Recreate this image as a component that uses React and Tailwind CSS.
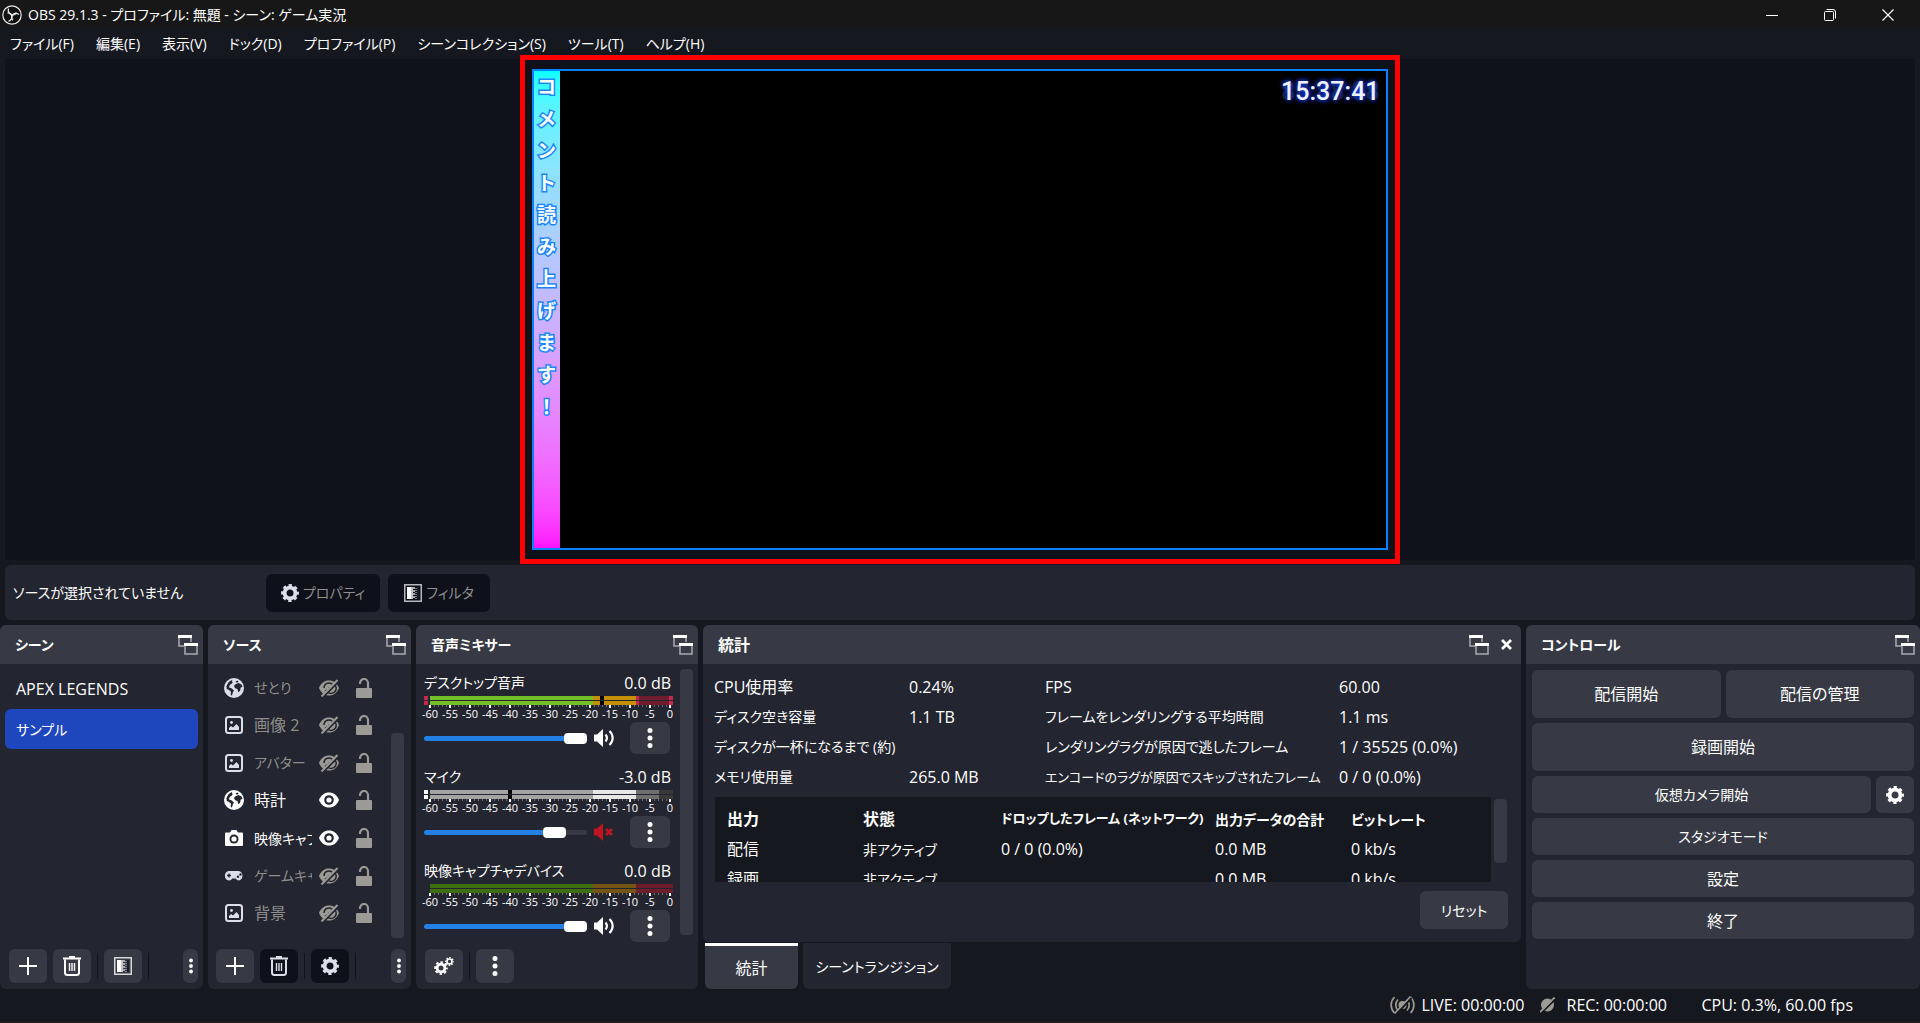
// src/App.jsx
import React, { useState } from 'react';

const MENU_ITEMS = [
  'ファイル(F)',
  '編集(E)',
  '表示(V)',
  'ドック(D)',
  'プロファイル(P)',
  'シーンコレクション(S)',
  'ツール(T)',
  'ヘルプ(H)',
];

const SCENES = ['APEX LEGENDS', 'サンプル'];

const SOURCES = [
  { name: 'せとり', icon: 'globe', visible: false },
  { name: '画像 2', icon: 'image', visible: false },
  { name: 'アバター', icon: 'image', visible: false },
  { name: '時計', icon: 'globe', visible: true },
  { name: '映像キャプチャデバイス', icon: 'camera', visible: true },
  { name: 'ゲームキャプチャ', icon: 'gamepad', visible: false },
  { name: '背景', icon: 'image', visible: false },
];

const CHANNELS = [
  {
    name: 'デスクトップ音声',
    db: '0.0 dB',
    volume: 100,
    muted: false,
    clip: '#c4284a',
    peak: 176,
    segments: [
      [6, 163, '#74bf26'],
      [169, 43, '#c48f00'],
      [212, 3, '#c4284a'],
      [215, 30, '#6f1d2d'],
      [245, 4, '#c4284a'],
    ],
  },
  {
    name: 'マイク',
    db: '-3.0 dB',
    volume: 85,
    muted: true,
    clip: '#ffffff',
    peak: 84,
    segments: [
      [6, 163, '#a3a3a3'],
      [169, 43, '#e6e6e6'],
      [212, 23, '#6e6e6e'],
      [235, 14, '#393939'],
    ],
  },
  {
    name: '映像キャプチャデバイス',
    db: '0.0 dB',
    volume: 100,
    muted: false,
    clip: null,
    peak: null,
    segments: [
      [6, 163, '#3f7010'],
      [169, 43, '#755414'],
      [212, 37, '#6f1d2d'],
    ],
  },
];

const METER_LABELS = ['-60', '-55', '-50', '-45', '-40', '-35', '-30', '-25', '-20', '-15', '-10', '-5', '0'];

const STATS = [
  ['CPU使用率', '0.24%', 'FPS', '60.00'],
  ['ディスク空き容量', '1.1 TB', 'フレームをレンダリングする平均時間', '1.1 ms'],
  ['ディスクが一杯になるまで (約)', '', 'レンダリングラグが原因で逃したフレーム', '1 / 35525 (0.0%)'],
  ['メモリ使用量', '265.0 MB', 'エンコードのラグが原因でスキップされたフレーム', '0 / 0 (0.0%)'],
];

const OUTPUTS = [
  ['配信', '非アクティブ', '0 / 0 (0.0%)', '0.0 MB', '0 kb/s'],
  ['録画', '非アクティブ', '', '0.0 MB', '0 kb/s'],
];

// labels that are mostly kana are set smaller than kanji and latin ones
const textSize = (text) => {
  const kana = (text.match(/[ぁ-ヶー]/g) || []).length;
  if (text.length > 20) return 'text-[13px]';
  return kana > text.length / 3 ? 'text-[14px]' : 'text-[16px]';
};

/* ---------- icons ---------- */

const ObsLogo = () => (
  <svg width="20" height="20" viewBox="0 0 20 20" fill="none" stroke="#e8e8e8">
    <circle cx="10" cy="10" r="9.2" fill="#111" strokeWidth="1.2" />
    <path d="M6.5 3.5c-.8 3.2.6 5.600 3.600 6.300 2.200.5 3.500-.6 4.300-2.300" strokeWidth="1.300" />
    <path d="M17 9.500c-2.600-1.600-5.200-1.300-6.700.8-1.200 1.900-.7 3.600.6 4.900" strokeWidth="1.300" />
    <path d="M6.500 16.300c2.700-1 3.700-3.300 3.200-5.600-.6-2-2.200-2.900-4.200-2.700" strokeWidth="1.300" />
  </svg>
);

const GearIcon = ({ size = 18, color = '#fff' }) => (
  <svg width={size} height={size} viewBox="0 0 20 20" fill="none" stroke={color}>
    <circle cx="10" cy="10" r="6" strokeWidth="4.200" />
    <circle cx="10" cy="10" r="8.500" strokeWidth="2.800" strokeDasharray="3.676 3" strokeDashoffset="1.838" />
  </svg>
);

const GearsIcon = () => (
  <svg width="20" height="18" viewBox="0 0 20 18" fill="none" stroke="#fff">
    <circle cx="7" cy="11" r="3.900" strokeWidth="2.800" />
    <circle cx="7" cy="11" r="5.800" strokeWidth="2" strokeDasharray="2.555 2" strokeDashoffset="1.277" />
    <circle cx="15.500" cy="4.500" r="2.500" strokeWidth="1.600" />
    <circle cx="15.500" cy="4.500" r="3.700" strokeWidth="1.400" strokeDasharray="1.600 1.306" strokeDashoffset=".8" />
  </svg>
);

const FilterIcon = ({ color = '#d8d8d8' }) => (
  <svg width="18" height="18" viewBox="0 0 18 18">
    <rect x=".75" y=".75" width="16.500" height="16.500" fill="none" stroke={color} strokeWidth="1.500" />
    <rect x="3" y="3" width="4" height="12" fill="#fff" />
    <rect x="7" y="3" width="2" height="12" fill="#c4c4c8" />
    <path d="M10 3v12" stroke="#a5a7ad" strokeWidth="2" strokeDasharray="2 1" />
    <path d="M12 4v11" stroke="#777a84" strokeWidth="2" strokeDasharray="1 1" />
    <rect x="13" y="3" width="2" height="12" fill="#1b1d26" />
  </svg>
);

const DockIcon = () => (
  <svg width="20" height="20" viewBox="0 0 20 20" fill="none">
    <path d="M6 11H1V2h12v5" stroke="#a9abb1" strokeWidth="1.500" />
    <path d="M0 1.500h14" stroke="#fff" strokeWidth="3" />
    <rect x="7" y="9" width="12" height="10" fill="#373a45" stroke="#a9abb1" strokeWidth="1.500" />
    <path d="M6 9.500h14" stroke="#fff" strokeWidth="3" />
  </svg>
);

const PlusIcon = () => (
  <svg width="18" height="18" viewBox="0 0 18 18" stroke="#fff" strokeWidth="2">
    <path d="M9 0v18M0 9h18" />
  </svg>
);

const TrashIcon = ({ color = '#fff' }) => (
  <svg width="20" height="20" viewBox="0 0 20 20" fill="none" stroke={color}>
    <path d="M1 2.500h18M7 1h6" strokeWidth="2" />
    <path d="M3 3.500v13a2.500 2.500 0 0 0 2.500 2.500h9a2.500 2.500 0 0 0 2.500-2.500v-13" strokeWidth="2" />
    <path d="M7.500 7v8M10 7v8M12.500 7v8" strokeWidth="1.400" />
  </svg>
);

const DotsIcon = ({ small = false }) => (
  <svg width="6" height={small ? 16 : 20} viewBox={small ? '0 0 6 16' : '0 0 6 20'} fill="#fff">
    <circle cx="3" cy="2.500" r={small ? 1.9 : 2.5} />
    <circle cx="3" cy={small ? 8 : 10} r={small ? 1.9 : 2.5} />
    <circle cx="3" cy={small ? 13.5 : 17.5} r={small ? 1.9 : 2.5} />
  </svg>
);

const EyeIcon = ({ visible }) =>
  visible ? (
    <svg width="20" height="16" viewBox="0 0 20 16">
      <path d="M0 8c2-5 5.500-7.500 10-7.500S18 3 20 8c-2 5-5.500 7.500-10 7.500S2 13 0 8z" fill="#fff" />
      <circle cx="10" cy="8" r="4.800" fill="#232530" />
      <circle cx="10" cy="8" r="2.600" fill="#fff" />
    </svg>
  ) : (
    <svg width="20" height="18" viewBox="0 0 20 18">
      <path d="M0 9c2-5 5.500-7.500 10-7.500S18 4 20 9c-2 5-5.500 7.500-10 7.500S2 14 0 9z" fill="#9c9a94" />
      <path d="M5 9a5 5 0 0 1 9-3M6 12.500 15 5a5 5 0 0 1-6 8.500" fill="none" stroke="#232530" strokeWidth="1.500" />
      <circle cx="10" cy="9" r="2" fill="none" stroke="#9c9a94" strokeWidth="1.500" />
      <path d="M3.500 18.500 19.500 2.500" stroke="#232530" strokeWidth="2.200" />
      <path d="M2.500 17.500 18.500 1" stroke="#9c9a94" strokeWidth="2" />
    </svg>
  );

const LockIcon = () => (
  <svg width="16" height="20" viewBox="0 0 16 20">
    <path d="M4 6V5a4 4 0 0 1 8 0v6" fill="none" stroke="#9c9a94" strokeWidth="2.200" />
    <rect y="10" width="16" height="10" rx="1" fill="#9c9a94" />
  </svg>
);

const SpeakerIcon = ({ muted }) => (
  <svg width="21" height="18" viewBox="0 0 21 18" fill={muted ? '#c0151f' : '#fff'}>
    <path d="M0 5.500h3L9 0v18l-6-5.500H0z" />
    {muted ? (
      <path d="M12 6l6 6M18 6l-6 6" stroke="#c0151f" strokeWidth="2.800" />
    ) : (
      <g fill="none" stroke="#fff" strokeWidth="2.200">
        <path d="M11.500 5.500c1.800 2.200 1.800 4.800 0 7" />
        <path d="M15.500 2c4.200 4.200 4.200 9.800 0 14" />
      </g>
    )}
  </svg>
);

const SourceIcon = ({ type, color }) => {
  if (type === 'globe') {
    return (
      <svg width="20" height="20" viewBox="0 0 20 20">
        <circle cx="10" cy="10" r="10" fill={color} />
        <path d="M7 2.500 4.500 4.200 2.500 8l.2 3 2 .8 2.300 2-.3 3.200 1.300.5.800-3 1.200-2-2.600-2.300-2.400-.7.700-2.500L8.500 5 8 2z" fill="#232530" />
        <path d="M11 6.500l3.500-1.500 3 1.500 1 2.500-1.800.5-.6 3.300-1.800 1.500-.9-3.300-2.200-.8-1.200-2zM11.500 3.500l2-1 1.200 1.500-2 .8z" fill="#232530" />
      </svg>
    );
  }
  if (type === 'camera') {
    return (
      <svg width="18" height="16" viewBox="0 0 18 16">
        <path d="M1 2.500h4L6.500 0h5L13 2.500h4a1 1 0 0 1 1 1V15a1 1 0 0 1-1 1H1a1 1 0 0 1-1-1V3.500a1 1 0 0 1 1-1z" fill={color} />
        <circle cx="9" cy="9" r="4.500" fill="#232530" />
        <circle cx="9" cy="9" r="2.600" fill={color} />
      </svg>
    );
  }
  if (type === 'gamepad') {
    return (
      <svg width="20" height="10" viewBox="0 0 20 10">
        <path d="M5 0h10a5 5 0 0 1 0 9.500c-1.500 0-2.500-.8-3.200-2H8.200C7.500 8.700 6.500 9.500 5 9.500A4.800 4.800 0 0 1 5 0z" fill={color} />
        <path d="M5 2.500v4M3 4.500h4" stroke="#232530" strokeWidth="1.400" />
        <circle cx="14" cy="5.800" r="1.200" fill="#232530" />
        <circle cx="16.500" cy="3.500" r="1.200" fill="#232530" />
      </svg>
    );
  }
  return (
    <svg width="18" height="18" viewBox="0 0 18 18">
      <rect x="1" y="1" width="16" height="16" rx="2.500" fill="none" stroke={color} strokeWidth="2" />
      <circle cx="6.500" cy="6.500" r="1.400" fill={color} />
      <path d="M4 14v-2l2-2 2 1.500L11.500 8l2.500 3v3z" fill={color} />
    </svg>
  );
};

/* ---------- shared pieces ---------- */

const DockTitle = ({ title, closable }) => (
  <header className="flex h-[39px] shrink-0 items-center rounded-t-md bg-[#373a45] pr-[5px] pl-[15px]">
    <h2 className={`flex-1 font-bold ${textSize(title)}`}>{title}</h2>
    <button type="button" aria-label="ドックを切り離す"><DockIcon /></button>
    {closable && (
      <button type="button" aria-label="閉じる" className="mr-1 ml-3">
        <svg width="11" height="11" viewBox="0 0 11 11" stroke="#fff" strokeWidth="2.800">
          <path d="M1 1l9 9M10 1l-9 9" />
        </svg>
      </button>
    )}
  </header>
);

const ToolButton = ({ label, dark, children }) => (
  <button
    type="button"
    aria-label={label}
    className={`flex h-[34px] w-[38px] items-center justify-center rounded-md ${dark ? 'bg-[#0e101a]' : 'bg-[#373a45]'}`}
  >
    {children}
  </button>
);

const Divider = () => <span className="h-[26px] w-px bg-[#12141c]" />;

const SmallMenuButton = () => (
  <button type="button" aria-label="その他" className="ml-auto flex h-[34px] w-[15px] items-center justify-center rounded-md bg-[#373a45]">
    <DotsIcon small />
  </button>
);

const ControlButton = ({ tall, label }) => (
  <button type="button" className={`flex-1 rounded-md bg-[#373a45] ${tall ? 'h-[48px]' : 'h-[37px]'} ${textSize(label)}`}>
    {label}
  </button>
);

/* ---------- docks ---------- */

const ScenesDock = () => {
  const [selected, setSelected] = useState(1);

  return (
    <section className="flex w-[203px] shrink-0 flex-col rounded-md bg-[#232530]">
      <DockTitle title="シーン" />
      <ul className="flex-1 p-[5px]">
        {SCENES.map((scene, i) => (
          <li key={scene}>
            <button
              type="button"
              onClick={() => setSelected(i)}
              className={`block h-10 w-full rounded-md px-[11px] text-left ${textSize(scene)} ${selected === i ? 'bg-[#1f47bd]' : ''}`}
            >
              {scene}
            </button>
          </li>
        ))}
      </ul>
      <div className="flex items-center gap-[6px] pr-[5px] pb-[6px] pl-[9px]">
        <ToolButton label="シーンを追加"><PlusIcon /></ToolButton>
        <ToolButton label="シーンを削除"><TrashIcon /></ToolButton>
        <Divider />
        <ToolButton label="シーンフィルタ"><FilterIcon /></ToolButton>
        <Divider />
        <SmallMenuButton />
      </div>
    </section>
  );
};

const SourcesDock = () => (
  <section className="flex w-[203px] shrink-0 flex-col rounded-md bg-[#232530]">
    <DockTitle title="ソース" />
    <div className="flex min-h-0 flex-1 pt-[5px] pr-[7px] pl-4">
      <ul className="grid h-[263px] flex-1 auto-rows-fr">
        {SOURCES.map((source) => (
          <li key={source.name} className="flex items-center">
            <span className="flex w-5 shrink-0 justify-center">
              <SourceIcon type={source.icon} color={source.visible ? '#fff' : '#dcdeea'} />
            </span>
            <span className={`ml-[10px] w-[58px] overflow-hidden whitespace-nowrap ${textSize(source.name)} ${source.visible ? '' : 'text-[#8f8e8b]'}`}>
              {source.name}
            </span>
            <button type="button" aria-label={`${source.name} 表示`} className="ml-[7px]"><EyeIcon visible={source.visible} /></button>
            <button type="button" aria-label={`${source.name} ロック`} className="ml-[17px]"><LockIcon /></button>
          </li>
        ))}
      </ul>
      <div className="mt-16 h-[205px] w-[13px] rounded-sm bg-[#373a45]" />
    </div>
    <div className="flex items-center gap-[6px] pr-[5px] pb-[6px] pl-2">
      <ToolButton label="ソースを追加"><PlusIcon /></ToolButton>
      <ToolButton label="ソースを削除" dark><TrashIcon color="#dcdeea" /></ToolButton>
      <Divider />
      <ToolButton label="ソースのプロパティ" dark><GearIcon color="#dcdeea" /></ToolButton>
      <Divider />
      <SmallMenuButton />
    </div>
  </section>
);

const VolumeMeter = ({ channel }) => (
  <svg width="250" height="12" viewBox="0 0 250 12" shapeRendering="crispEdges" className="block">
    {[0, 5].map((y) => (
      <g key={y}>
        {channel.clip && <rect x="0" y={y} width="4" height="4" fill={channel.clip} />}
        {channel.segments.map(([x, width, fill]) => (
          <rect key={x} x={x} y={y} width={width} height="4" fill={fill} />
        ))}
        {channel.peak && <rect x={channel.peak} y={y} width="4" height="4" fill="#000" />}
      </g>
    ))}
    {Array.from({ length: 61 }, (_, i) => (
      <rect
        key={i}
        x={i % 5 === 0 ? 5 + i * 4 : 6 + i * 4}
        y="9"
        width={i % 5 === 0 ? 2 : 1}
        height={i % 5 === 0 ? 3 : 2}
        fill={i % 5 === 0 ? '#fff' : '#6a6a6a'}
      />
    ))}
  </svg>
);

const MixerChannel = ({ channel }) => {
  const [volume, setVolume] = useState(channel.volume);

  return (
    <div className="h-[94px]">
      <div className="flex h-[27px] w-[247px] items-center justify-between whitespace-nowrap">
        <span className="text-[14px]">{channel.name}</span>
        <span className="text-[16px]">{channel.db}</span>
      </div>
      <VolumeMeter channel={channel} />
      <div className="-ml-1 flex h-[14px] text-[11px] leading-3">
        {METER_LABELS.map((label) => (
          <span key={label} className="w-5 text-center">{label}</span>
        ))}
      </div>
      <div className="flex h-8 items-center">
        <input
          type="range"
          aria-label={channel.name}
          value={volume}
          onChange={(e) => setVolume(Number(e.target.value))}
          style={{ '--fill': `${volume * 0.9}%` }}
          className="h-3 w-[163px] appearance-none bg-transparent [&::-webkit-slider-runnable-track]:h-[5px] [&::-webkit-slider-runnable-track]:rounded-full [&::-webkit-slider-runnable-track]:bg-[linear-gradient(to_right,#2380e4_var(--fill),#373a45_var(--fill))] [&::-webkit-slider-thumb]:-mt-[3px] [&::-webkit-slider-thumb]:h-[11px] [&::-webkit-slider-thumb]:w-[23px] [&::-webkit-slider-thumb]:appearance-none [&::-webkit-slider-thumb]:rounded [&::-webkit-slider-thumb]:bg-white"
        />
        <button type="button" aria-label="ミュート" className="ml-[7px]"><SpeakerIcon muted={channel.muted} /></button>
        <button type="button" aria-label="音声メニュー" className="ml-[15px] flex h-8 w-10 items-center justify-center rounded-md bg-[#373a45]">
          <DotsIcon />
        </button>
      </div>
    </div>
  );
};

const MixerDock = () => (
  <section className="flex w-[282px] shrink-0 flex-col rounded-md bg-[#232530]">
    <DockTitle title="音声ミキサー" />
    <div className="flex min-h-0 flex-1 justify-between pt-[5px] pr-[5px] pl-2">
      <div>
        {CHANNELS.map((channel) => (
          <MixerChannel key={channel.name} channel={channel} />
        ))}
      </div>
      <div className="h-[266px] w-[13px] rounded-sm bg-[#373a45]" />
    </div>
    <div className="flex items-center gap-[6px] pb-[6px] pl-[9px]">
      <ToolButton label="オーディオの詳細"><GearsIcon /></ToolButton>
      <Divider />
      <ToolButton label="メニュー"><DotsIcon /></ToolButton>
    </div>
  </section>
);

const StatsDock = () => (
  <div className="flex min-w-0 flex-1 flex-col">
    <section className="flex flex-1 flex-col rounded-md bg-[#232530]">
      <DockTitle title="統計" closable />
      <dl className="grid grid-cols-[195px_136px_294px_1fr] px-[11px] pt-2 whitespace-nowrap">
        {STATS.flat().map((text, i) =>
          i % 2 === 0 ? (
            <dt key={i} className={`h-[30px] leading-[30px] ${textSize(text)}`}>{text}</dt>
          ) : (
            <dd key={i} className="h-[30px] text-[16px] leading-[30px]">{text}</dd>
          )
        )}
      </dl>
      <div className="mt-[5px] flex gap-[3px] pr-[14px] pl-3">
        <div className="h-[85px] flex-1 overflow-hidden bg-[#161820] pt-[7px] pl-3">
          <table className="w-full table-fixed text-left whitespace-nowrap">
            <thead>
              <tr className="h-[30px]">
                <th className="w-[136px] text-[16px]">出力</th>
                <th className="w-[138px] text-[16px]">状態</th>
                <th className="w-[214px] text-[13px]">ドロップしたフレーム (ネットワーク)</th>
                <th className="w-[136px] text-[14px]">出力データの合計</th>
                <th className="text-[14px]">ビットレート</th>
              </tr>
            </thead>
            <tbody>
              {OUTPUTS.map((row) => (
                <tr key={row[0]} className="h-[30px]">
                  {row.map((cell, i) => (
                    <td key={i} className={textSize(cell)}>{cell}</td>
                  ))}
                </tr>
              ))}
            </tbody>
          </table>
        </div>
        <div className="mt-[2px] h-16 w-[13px] rounded-sm bg-[#373a45]" />
      </div>
      <div className="mt-auto flex justify-end pr-[13px] pb-[13px]">
        <button type="button" className="h-[38px] w-[88px] rounded-md bg-[#373a45] text-[14px]">リセット</button>
      </div>
    </section>
    <div role="tablist" className="mt-px flex gap-[5px] pl-[2px]">
      <button type="button" role="tab" aria-selected="true" className="h-[46px] w-[93px] rounded-b-md border-t-[3px] border-white bg-[#373a45] text-[16px]">統計</button>
      <button type="button" role="tab" aria-selected="false" className="h-[46px] w-[148px] rounded-b-md bg-[#232530] text-[14px]">シーントランジション</button>
    </div>
  </div>
);

const ControlsDock = () => (
  <section className="flex w-[394px] shrink-0 flex-col rounded-md bg-[#232530]">
    <DockTitle title="コントロール" />
    <div className="flex flex-col gap-[5px] px-[6px] pt-[6px]">
      <div className="flex gap-[5px]">
        <ControlButton tall label="配信開始" />
        <ControlButton tall label="配信の管理" />
      </div>
      <div className="flex"><ControlButton tall label="録画開始" /></div>
      <div className="flex gap-[5px]">
        <ControlButton label="仮想カメラ開始" />
        <button type="button" aria-label="仮想カメラの設定" className="flex w-[38px] items-center justify-center rounded-md bg-[#373a45]">
          <GearIcon />
        </button>
      </div>
      <div className="flex"><ControlButton label="スタジオモード" /></div>
      <div className="flex"><ControlButton label="設定" /></div>
      <div className="flex"><ControlButton label="終了" /></div>
    </div>
  </section>
);

/* ---------- window parts ---------- */

const TitleBar = () => (
  <div className="flex h-[29px] shrink-0 items-center bg-[#171717] pl-[2px] text-[14px]">
    <ObsLogo />
    <h1 className="ml-[6px] flex-1">OBS 29.1.3 - プロファイル: 無題 - シーン: ゲーム実況</h1>
    <div className="flex gap-[46px] pr-[26px]">
      <button type="button" aria-label="最小化">
        <svg width="12" height="12" viewBox="0 0 12 12" stroke="#fff"><path d="M0 6.500h12" /></svg>
      </button>
      <button type="button" aria-label="元に戻す">
        <svg width="12" height="12" viewBox="0 0 12 12" fill="none" stroke="#fff">
          <rect x=".5" y="2.500" width="9" height="9" rx="1" />
          <path d="M2.500.5H9a2.500 2.500 0 0 1 2.500 2.500v6.500" />
        </svg>
      </button>
      <button type="button" aria-label="閉じる">
        <svg width="12" height="12" viewBox="0 0 12 12" stroke="#fff" strokeWidth="1.200"><path d="M.5.5l11 11M11.500.5l-11 11" /></svg>
      </button>
    </div>
  </div>
);

const MenuBar = () => (
  <nav className="flex h-[30px] shrink-0 items-center gap-[22px] px-[10px] pb-[2px] text-[14px] whitespace-nowrap">
    {MENU_ITEMS.map((item) => (
      <button type="button" key={item}>{item}</button>
    ))}
  </nav>
);

const Preview = () => (
  <main className="mx-[5px] flex min-h-[300px] flex-1 justify-center bg-[#0f111b] py-[10px]">
    <div className="relative flex aspect-video h-full justify-between border-2 border-[#0a80ff] bg-black">
      <div className="h-full w-[26px] bg-linear-to-b from-[#00ffff] via-[#bfbfff] via-45% to-[#ff10ff]">
        <p className="w-6 text-center text-[19px] leading-8 font-bold text-white [font-feature-settings:normal] [line-break:anywhere] [paint-order:stroke] [-webkit-text-stroke:3px_#1a86ff]">
          コメント読み上げます！
        </p>
      </div>
      <div className="relative mt-[6px] mr-[6px] h-[29px] font-[Roboto] text-[25px] leading-[29px] font-medium">
        <span aria-hidden="true" className="text-[#1c1c20]">88:88:88</span>
        <time className="absolute inset-0 text-right text-[#eef2ff] [text-shadow:0_0_4px_#1440ff,0_0_6px_#1440ff]">15:37:41</time>
      </div>
      <div className="pointer-events-none absolute -inset-x-[14px] -inset-y-4 border-[5px] border-[#ff0000]" />
    </div>
  </main>
);

const ContextBar = () => (
  <div className="mx-[5px] my-[5px] flex h-[55px] shrink-0 items-center rounded-md bg-[#232530] pl-2 text-[14px]">
    <span className="w-[253px] whitespace-nowrap">ソースが選択されていません</span>
    <button type="button" className="flex h-[38px] w-[114px] items-center justify-center gap-1 rounded-md bg-[#0e101a] text-[#8f8e8b]">
      <GearIcon color="#dcdeea" />
      プロパティ
    </button>
    <button type="button" className="ml-2 flex h-[38px] w-[102px] items-center justify-center gap-1 rounded-md bg-[#0e101a] text-[#8f8e8b]">
      <FilterIcon color="#b6b7c2" />
      フィルタ
    </button>
  </div>
);

const StatusBar = () => (
  <footer className="flex h-[34px] shrink-0 items-center justify-end border-b-2 border-[#221d1c] pr-[67px] text-[16px] whitespace-nowrap">
    <svg width="25" height="20" viewBox="0 0 25 20" fill="none" stroke="#9c9a94" strokeWidth="1.700">
      <circle cx="12.500" cy="10" r="4" fill="#9c9a94" stroke="none" />
      <path d="M8 4.500c-3 3.200-3 7.800 0 11M4.500 2c-4.500 4.500-4.500 11.500 0 16M17 4.500c3 3.200 3 7.800 0 11M20.500 2c4.500 4.500 4.500 11.500 0 16" />
      <path d="M6 19.500 21.500 3" stroke="#161820" strokeWidth="2" />
      <path d="M4.500 18.500 20.500 1.500" />
    </svg>
    <span className="ml-[7px] w-[118px]">LIVE: 00:00:00</span>
    <svg width="15" height="16" viewBox="0 0 15 16" fill="none">
      <circle cx="7.500" cy="8" r="6.500" fill="#9c9a94" />
      <path d="M1.500 16 15 2.500" stroke="#161820" strokeWidth="1.600" />
      <path d="M0 15 14.500.5" stroke="#9c9a94" strokeWidth="1.800" />
    </svg>
    <span className="ml-3 w-[135px]">REC: 00:00:00</span>
    <span>CPU: 0.3%, 60.00 fps</span>
  </footer>
);

const App = () => (
  <div className="flex h-screen min-h-[760px] flex-col bg-[#161820] font-['Open_Sans','Noto_Sans_CJK_JP',sans-serif] text-white [font-feature-settings:'palt']">
    <TitleBar />
    <MenuBar />
    <Preview />
    <ContextBar />
    <div className="flex h-[364px] shrink-0 gap-[5px]">
      <ScenesDock />
      <SourcesDock />
      <MixerDock />
      <StatsDock />
      <ControlsDock />
    </div>
    <StatusBar />
  </div>
);

export default App;
